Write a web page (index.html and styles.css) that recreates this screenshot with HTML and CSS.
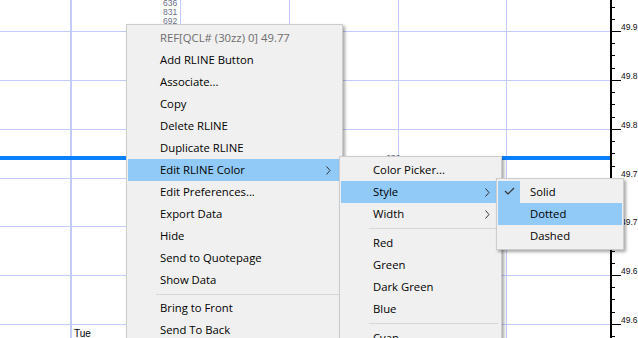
FILE: index.html
```html
<!DOCTYPE html>
<html lang="en">
<head>
    <meta charset="UTF-8">
    <title>Chart - RLINE menu</title>
    <link rel="stylesheet" href="styles.css">
</head>
<body>
    <div class="screen">
        <svg class="chart" width="638" height="338" viewBox="0 0 638 338" shape-rendering="crispEdges">
            <!-- grid -->
            <g class="grid">
                <rect x="70" y="0" width="2" height="338"/>
                <rect x="180" y="0" width="1" height="338"/>
                <rect x="289" y="0" width="1" height="338"/>
                <rect x="398" y="0" width="1" height="338"/>
                <rect x="506" y="0" width="1" height="338"/>
                <rect x="0" y="31" width="610" height="1"/>
                <rect x="0" y="80" width="610" height="1"/>
                <rect x="0" y="129" width="610" height="1"/>
                <rect x="0" y="178" width="610" height="1"/>
                <rect x="0" y="226" width="610" height="1"/>
                <rect x="0" y="275" width="610" height="1"/>
                <rect x="0" y="324" width="610" height="1"/>
            </g>

            <!-- rline -->
            <rect class="rline" x="0" y="156" width="610" height="4"/>

            <!-- price axis -->
            <g class="axis">
                <rect x="610" y="0" width="2" height="338"/>
                <rect x="612" y="31" width="9" height="1"/>
                <rect x="612" y="80" width="9" height="1"/>
                <rect x="612" y="129" width="9" height="1"/>
                <rect x="612" y="178" width="9" height="1"/>
                <rect x="612" y="226" width="9" height="1"/>
                <rect x="612" y="275" width="9" height="1"/>
                <rect x="612" y="324" width="9" height="1"/>
                <rect x="612" y="7" width="3" height="1"/>
                <rect x="612" y="19" width="3" height="1"/>
                <rect x="612" y="43" width="3" height="1"/>
                <rect x="612" y="55" width="3" height="1"/>
                <rect x="612" y="68" width="3" height="1"/>
                <rect x="612" y="92" width="3" height="1"/>
                <rect x="612" y="104" width="3" height="1"/>
                <rect x="612" y="117" width="3" height="1"/>
                <rect x="612" y="141" width="3" height="1"/>
                <rect x="612" y="153" width="3" height="1"/>
                <rect x="612" y="166" width="3" height="1"/>
                <rect x="612" y="190" width="3" height="1"/>
                <rect x="612" y="202" width="3" height="1"/>
                <rect x="612" y="214" width="3" height="1"/>
                <rect x="612" y="238" width="3" height="1"/>
                <rect x="612" y="251" width="3" height="1"/>
                <rect x="612" y="263" width="3" height="1"/>
                <rect x="612" y="287" width="3" height="1"/>
                <rect x="612" y="299" width="3" height="1"/>
                <rect x="612" y="312" width="3" height="1"/>
                <rect x="612" y="336" width="3" height="1"/>
            </g>
            <g class="axis-label">
                <text x="621" y="30">49.9</text>
                <text x="621" y="79">49.8</text>
                <text x="621" y="128">49.8</text>
                <text x="621" y="177">49.7</text>
                <text x="621" y="225">49.7</text>
                <text x="621" y="274">49.6</text>
                <text x="621" y="323">49.6</text>
            </g>

            <!-- volume stack -->
            <g class="vol-label">
                <text x="163" y="6">636</text>
                <text x="163" y="15">831</text>
                <text x="163" y="24">692</text>
                <text x="386" y="161">636</text>
            </g>

            <text class="day-label" x="74" y="337">Tue</text>
        </svg>

        <div class="menu menu-main">
            <div class="item disabled">REF[QCL# (30zz) 0] 49.77</div>
            <div class="item">Add RLINE Button</div>
            <div class="item">Associate...</div>
            <div class="item">Copy</div>
            <div class="item">Delete RLINE</div>
            <div class="item">Duplicate RLINE</div>
            <div class="item on">Edit RLINE Color
                <svg class="arrow" width="5" height="9" viewBox="0 0 5 9"><polyline points="0.5,0.5 4,4.5 0.5,8.5"/></svg>
            </div>
            <div class="item">Edit Preferences...</div>
            <div class="item">Export Data</div>
            <div class="item">Hide</div>
            <div class="item">Send to Quotepage</div>
            <div class="item">Show Data</div>
            <div class="sep"></div>
            <div class="item">Bring to Front</div>
            <div class="item">Send To Back</div>
        </div>

        <div class="menu menu-color">
            <div class="item">Color Picker...</div>
            <div class="item on">Style
                <svg class="arrow" width="5" height="9" viewBox="0 0 5 9"><polyline points="0.5,0.5 4,4.5 0.5,8.5"/></svg>
            </div>
            <div class="item">Width
                <svg class="arrow" width="5" height="9" viewBox="0 0 5 9"><polyline points="0.5,0.5 4,4.5 0.5,8.5"/></svg>
            </div>
            <div class="sep"></div>
            <div class="item">Red</div>
            <div class="item">Green</div>
            <div class="item">Dark Green</div>
            <div class="item">Blue</div>
            <div class="sep"></div>
            <div class="item">Cyan</div>
        </div>

        <div class="menu menu-style">
            <div class="item check-item">
                <span class="check on">
                    <svg width="22" height="22" viewBox="0 0 22 22"><polyline points="7,10 10,13 16,7"/></svg>
                </span>
                Solid
            </div>
            <div class="item check-item on"><span class="check"></span>Dotted</div>
            <div class="item check-item"><span class="check"></span>Dashed</div>
        </div>
    </div>
</body>
</html>
```

FILE: styles.css
```css
* {
    margin: 0;
    padding: 0;
    box-sizing: border-box;
}

body {
    width: 638px;
    height: 338px;
    overflow: hidden;
    background: #ffffff;
    font-family: 'Open Sans', 'Noto Sans', sans-serif;
}

.screen {
    position: relative;
    width: 638px;
    height: 338px;
    overflow: hidden;
}

.chart {
    display: block;
}

.grid rect { fill: #c3cbfd; }
.rline { fill: #0a80ff; }
.axis rect { fill: #000000; }

.axis-label text {
    font-family: 'Liberation Sans', Arial, sans-serif;
    font-size: 8.5px;
    fill: #111111;
}

.vol-label text {
    font-family: 'Liberation Sans', Arial, sans-serif;
    font-size: 8.5px;
    fill: #6a7082;
}

.day-label {
    font-family: 'Liberation Sans', Arial, sans-serif;
    font-size: 10px;
    fill: #000000;
}

/* context menus */
.menu {
    position: absolute;
    background: #f0f0f0;
    border: 1px solid #cccccc;
    padding: 2px 1px;
    box-shadow: 2px 2px 3px rgba(0, 0, 0, 0.35);
    font-size: 11.3px;
    color: #000000;
}

.menu-main { left: 126px; top: 24px; width: 217px; }
.menu-color { left: 339px; top: 156px; width: 163px; }
.menu-style { left: 496px; top: 178px; width: 128px; }

.item {
    height: 22px;
    display: flex;
    align-items: center;
    padding-left: 32px;
    padding-right: 10px;
    padding-bottom: 2px;
    white-space: nowrap;
}

.item.on { background: #91c9f7; }
.item.disabled { color: #6d6d6d; }

.arrow {
    margin-left: auto;
    margin-top: 2px;
    fill: none;
    stroke: #333333;
    stroke-width: 1;
}

.sep {
    height: 1px;
    background: #d7d7d7;
    margin: 3px 2px 3px 28px;
}

.menu-main .sep { margin-bottom: 2px; }

.check-item { padding-left: 0; }

.check {
    width: 22px;
    height: 22px;
    margin-right: 10px;
    margin-top: 2px;
    flex: none;
}

.check.on { background: #91c9f7; }

.check svg {
    display: block;
    fill: none;
    stroke: #333333;
    stroke-width: 1.2;
}
```
